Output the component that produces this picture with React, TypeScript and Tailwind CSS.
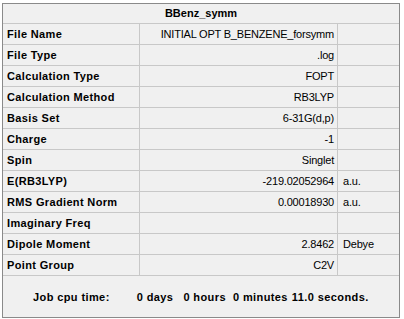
const rows: [string, string, string][] = [
  ['File Name', 'INITIAL OPT B_BENZENE_forsymm', ''],
  ['File Type', '.log', ''],
  ['Calculation Type', 'FOPT', ''],
  ['Calculation Method', 'RB3LYP', ''],
  ['Basis Set', '6-31G(d,p)', ''],
  ['Charge', '-1', ''],
  ['Spin', 'Singlet', ''],
  ['E(RB3LYP)', '-219.02052964', 'a.u.'],
  ['RMS Gradient Norm', '0.00018930', 'a.u.'],
  ['Imaginary Freq', '', ''],
  ['Dipole Moment', '2.8462', 'Debye'],
  ['Point Group', 'C2V', ''],
];

function SummaryRow({ label, value, unit }: { label: string; value: string; unit: string }) {
  return (
    <div className="grid grid-cols-[137px_198px_61px] h-[21px] border-b border-[#c8c8c8]">
      <div className="border-r border-[#c8c8c8] flex items-center pl-[4px] font-bold tracking-[0.35px]">
        {label}
      </div>
      <div className="border-r border-[#c8c8c8] flex items-center justify-end pr-[3px] tracking-[-0.2px]">
        {value}
      </div>
      <div className="flex items-center pl-[5px] tracking-[-0.2px]">{unit}</div>
    </div>
  );
}

export default function App() {
  return (
    <div className="w-[404px] h-[319px] bg-white pt-[3px] pl-[2px] font-['Liberation_Sans',Arial,sans-serif] text-[11px] text-black">
      <div className="w-[398px] h-[315px] border border-[#8a8a8a] bg-[#f0f0f0] flex flex-col">
        <div className="h-[20px] border-b border-[#c8c8c8] flex items-center justify-center font-bold">
          BBenz_symm
        </div>
        {rows.map(([label, value, unit]) => (
          <SummaryRow key={label} label={label} value={value} unit={unit} />
        ))}
        {/* job timing footer */}
        <div className="flex-1 flex items-center font-bold tracking-[0.4px] pt-[1px]">
          <span className="ml-[30px]">Job cpu time:</span>
          <span className="ml-[27px]">0 days</span>
          <span className="ml-[10px]">0 hours</span>
          <span className="ml-[7px]">0 minutes</span>
          <span className="ml-[4px]">11.0 seconds.</span>
        </div>
      </div>
    </div>
  );
}
